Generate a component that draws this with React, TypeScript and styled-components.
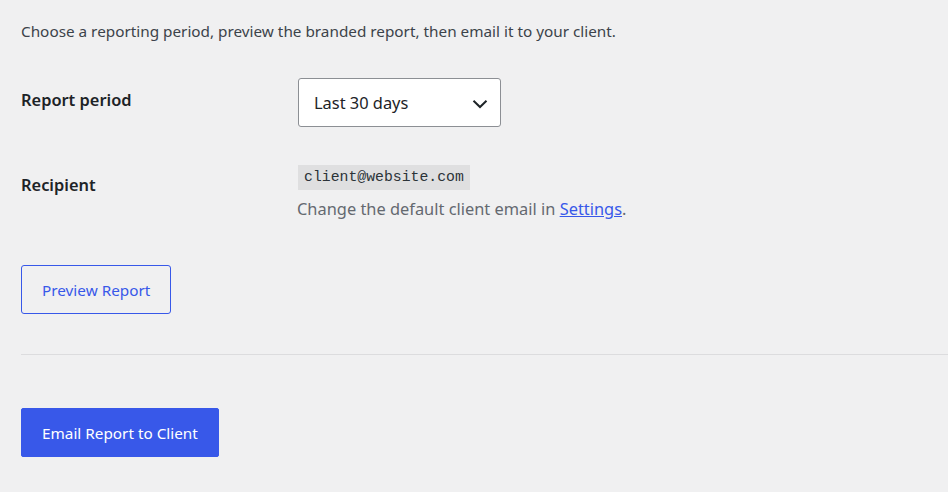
import React, { FC } from "react";
import styled, { createGlobalStyle } from "styled-components";

const GlobalStyle = createGlobalStyle`
  html, body {
    margin: 0;
    background: #f0f0f1;
  }
  body {
    font-family: "Noto Sans", "Open Sans", sans-serif;
    color: #1d2327;
  }
`;

const App: FC = () => {
  return (
    <>
      <GlobalStyle />
      <Page>
        <Intro>
          Choose a reporting period, preview the branded report, then email it
          to your client.
        </Intro>
        <FormTable>
          <Label $top={10}>Report period</Label>
          <Field>
            <Select>
              <span>Last 30 days</span>
              <svg width="16" height="10" viewBox="0 0 16 10" fill="none">
                <path
                  d="M1.5 1.8 8 8l6.5-6.2"
                  stroke="#1d2327"
                  strokeWidth="2"
                />
              </svg>
            </Select>
          </Field>
          <Label $top={8}>Recipient</Label>
          <Field>
            <Code>client@website.com</Code>
            <Help>
              Change the default client email in <a href="#">Settings</a>.
            </Help>
          </Field>
        </FormTable>
        <SecondaryButton>Preview Report</SecondaryButton>
        <Divider />
        <PrimaryButton>Email Report to Client</PrimaryButton>
      </Page>
    </>
  );
};

const Page = styled.div`
  padding: 21px 0 0 21px;
`;

const Intro = styled.p`
  margin: 0;
  font-size: 15.3px;
  line-height: 20px;
  color: #3c434a;
`;

const FormTable = styled.div`
  display: grid;
  grid-template-columns: 277px 1fr;
  row-gap: 38px;
  margin-top: 37px;
`;

const Label = styled.div<{ $top: number }>`
  padding-top: ${(p) => p.$top}px;
  font-size: 16.4px;
  font-weight: 600;
  line-height: 24px;
  color: #1d2327;
`;

const Field = styled.div`
  display: flex;
  flex-direction: column;
  align-items: flex-start;
`;

const Select = styled.div`
  box-sizing: border-box;
  width: 203px;
  height: 49px;
  display: flex;
  align-items: center;
  justify-content: space-between;
  padding: 0 12px 0 15px;
  background: #fff;
  border: 1px solid #8c8f94;
  border-radius: 3px;
  font-size: 16.4px;
  color: #1d2327;

  svg {
    margin-top: 2px;
  }
`;

const Code = styled.code`
  display: inline-block;
  padding: 1px 6px 2px;
  background: #dfdfe0;
  font-family: "Liberation Mono", "DejaVu Sans Mono", monospace;
  font-size: 14.8px;
  line-height: 22px;
  color: #2c3338;
`;

const Help = styled.p`
  margin: 7px 0 0 -1px;
  font-size: 16.4px;
  line-height: 24px;
  color: #646970;

  a {
    color: #3858e9;
  }
`;

const SecondaryButton = styled.button`
  display: block;
  margin-top: 44px;
  box-sizing: border-box;
  height: 49px;
  padding: 0 20px;
  background: transparent;
  border-width: 1px;
  border-style: solid;
  border-color: #3858e9;
  border-radius: 3px;
  color: #3858e9;
  font-family: inherit;
  font-size: 15.3px;
  cursor: pointer;
`;

const Divider = styled.hr`
  margin: 40px 0 0;
  border: 0;
  border-top: 1px solid #dcdcde;
`;

const PrimaryButton = styled.button`
  display: block;
  margin-top: 53px;
  box-sizing: border-box;
  height: 49px;
  padding: 0 20px;
  background: #3858e9;
  border: 1px solid #3858e9;
  border-radius: 2px;
  color: #fff;
  font-family: inherit;
  font-size: 15.3px;
  cursor: pointer;
`;

export default App;
